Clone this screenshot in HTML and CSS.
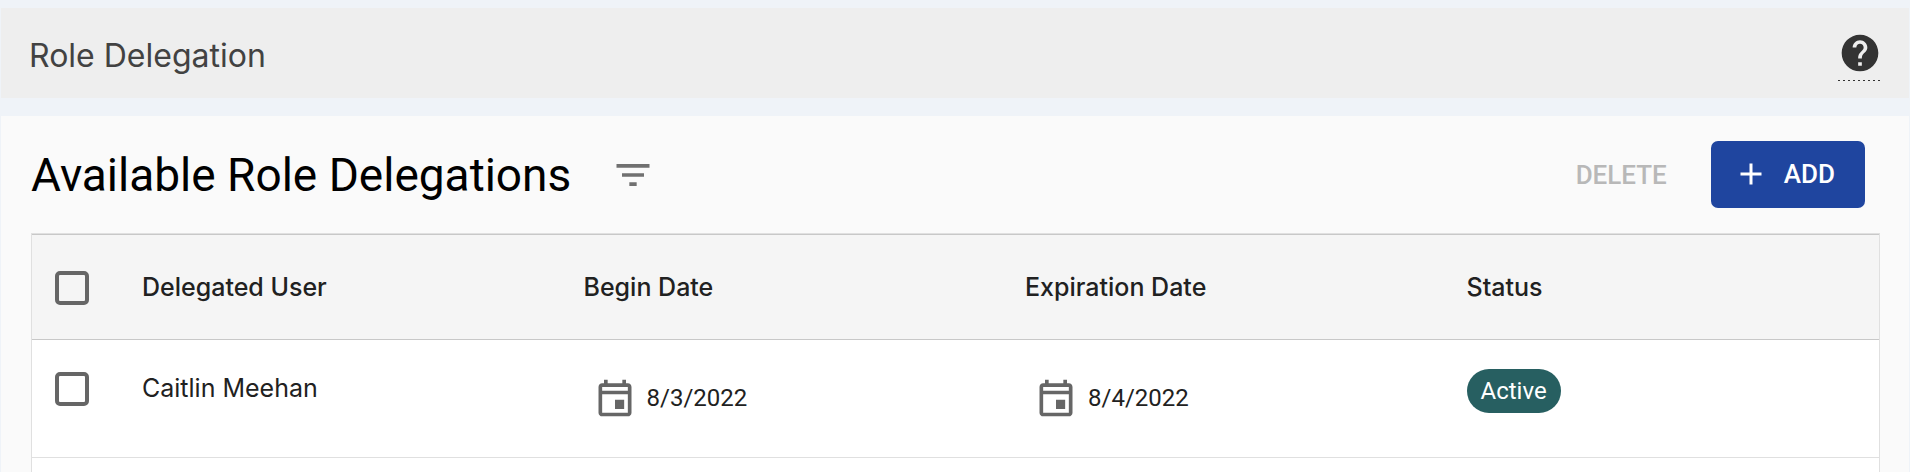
FILE: index.html
```html
<!DOCTYPE html>
<html lang="en">
<head>
<meta charset="utf-8">
<title>Role Delegation</title>
<link rel="stylesheet" href="styles.css">
</head>
<body>
<header class="page-header">
  <h1 class="page-title">Role Delegation</h1>
  <button class="help" type="button" aria-label="Help">
    <svg class="icon" viewBox="0 0 24 24" aria-hidden="true"><path d="M12 2C6.48 2 2 6.48 2 12s4.48 10 10 10 10-4.48 10-10S17.52 2 12 2zm1 17h-2v-2h2v2zm2.07-7.75l-.9.92C13.45 12.9 13 13.5 13 15h-2v-.5c0-1.1.45-2.1 1.17-2.83l1.24-1.26c.37-.36.59-.86.59-1.41 0-1.1-.9-2-2-2s-2 .9-2 2H8c0-2.21 1.79-4 4-4s4 1.79 4 4c0 .88-.36 1.68-.93 2.25z"/></svg>
  </button>
</header>
<main class="panel">
  <div class="toolbar">
    <h2 class="panel-title">Available Role Delegations</h2>
    <button class="filter" type="button" aria-label="Filter list">
      <svg class="icon" viewBox="0 0 24 24" aria-hidden="true"><path d="M10 18h4v-2h-4v2zM3 6v2h18V6H3zm3 7h12v-2H6v2z"/></svg>
    </button>
    <div class="actions">
      <button class="button button-text" type="button" disabled>DELETE</button>
      <button class="button button-primary" type="button">
        <svg class="icon-small" viewBox="0 0 24 24" aria-hidden="true"><path d="M19 13h-6v6h-2v-6H5v-2h6V5h2v6h6v2z"/></svg>
        ADD
      </button>
    </div>
  </div>
  <table class="table">
    <thead>
      <tr>
        <th class="check-cell"><input class="checkbox" type="checkbox" aria-label="Select all"></th>
        <th scope="col">Delegated User</th>
        <th scope="col">Begin Date</th>
        <th scope="col">Expiration Date</th>
        <th scope="col">Status</th>
      </tr>
    </thead>
    <tbody>
      <tr>
        <td class="check-cell"><input class="checkbox" type="checkbox" aria-label="Select Caitlin Meehan"></td>
        <td>Caitlin Meehan</td>
        <td><div class="date"><svg class="icon" viewBox="0 0 24 24" aria-hidden="true"><path d="M19 4h-1V2h-2v2H8V2H6v2H5c-1.11 0-1.99.9-1.99 2L3 20c0 1.1.89 2 2 2h14c1.1 0 2-.9 2-2V6c0-1.1-.9-2-2-2zm0 16H5V10h14v10zm0-12H5V6h14v2zm-7 5h5v5h-5z"/></svg>8/3/2022</div></td>
        <td><div class="date"><svg class="icon" viewBox="0 0 24 24" aria-hidden="true"><path d="M19 4h-1V2h-2v2H8V2H6v2H5c-1.11 0-1.99.9-1.99 2L3 20c0 1.1.89 2 2 2h14c1.1 0 2-.9 2-2V6c0-1.1-.9-2-2-2zm0 16H5V10h14v10zm0-12H5V6h14v2zm-7 5h5v5h-5z"/></svg>8/4/2022</div></td>
        <td class="chip-cell"><span class="chip">Active</span></td>
      </tr>
      <tr class="next-row"><td colspan="5"></td></tr>
    </tbody>
  </table>
</main>
</body>
</html>
```
FILE: styles.css
```css
* { box-sizing: border-box; }

body {
  margin: 0;
  padding: 8px 1px 0;
  background: #eff3f8;
  color: #212121;
  font-family: Inter, sans-serif;
  font-size: 25px;
  line-height: 32px;
}

button {
  border: 0;
  padding: 0;
  background: none;
  color: inherit;
  font: inherit;
}

.icon { display: block; width: 44px; height: 44px; fill: currentColor; }
.icon-small { display: block; width: 36px; height: 36px; fill: currentColor; }

.page-header {
  display: flex;
  align-items: center;
  justify-content: space-between;
  padding: 23px 27px 17px 28px;
  background: #eee;
}

.page-title {
  margin: 0;
  color: #424242;
  font-size: 32px;
  font-weight: 400;
  line-height: 40px;
}

.help {
  padding-bottom: 6px;
  background: repeating-linear-gradient(90deg, #333 0 2px, transparent 2px 5px) bottom / 100% 1px no-repeat;
  color: #333;
}

.panel {
  margin-top: 18px;
  padding: 0 29px 0 30px;
  background: #fafafa;
}

.toolbar {
  display: flex;
  align-items: center;
  padding: 25px 15px 25px 0;
  font-family: Roboto, sans-serif;
}

.panel-title {
  margin: 0;
  color: #000;
  font-size: 46px;
  font-weight: 400;
  line-height: 56px;
}

.filter { margin-left: 40px; color: #707070; }

.actions {
  display: flex;
  align-items: center;
  gap: 44px;
  margin-left: auto;
}

.button { font-size: 26px; font-weight: 500; }
.button-text { color: #b8b8b8; }

.button-primary {
  display: flex;
  align-items: center;
  gap: 15px;
  padding: 15px 30px 16px 22px;
  border-radius: 7px;
  background: #1f459f;
  color: #fff;
}

.table {
  width: 100%;
  table-layout: fixed;
  border: 1px solid #e0e0e0;
  border-spacing: 0;
  background: #fff;
}

.table th,
.table td { padding: 0 0 0 29px; text-align: left; vertical-align: top; }

.table th {
  height: 106px;
  padding-top: 36px;
  border-top: 1px solid #c8c8c8;
  border-bottom: 1px solid #c8c8c8;
  background: #f5f5f5;
  font-weight: 500;
}

.table td {
  height: 118px;
  padding-top: 32px;
  border-bottom: 1px solid #e0e0e0;
}

.table .check-cell { width: 81px; padding-left: 23px; }
.table .chip-cell { padding-top: 29px; }

.checkbox {
  display: block;
  width: 34px;
  height: 34px;
  margin: 0;
  border: 4px solid #666;
  border-radius: 5px;
  appearance: none;
}

.date {
  display: flex;
  align-items: center;
  gap: 10px;
  margin-top: 4px;
  padding-left: 9px;
  font-family: Roboto, sans-serif;
  font-size: 24px;
}

.date .icon { fill: #666; }

.chip {
  display: block;
  width: fit-content;
  padding: 6px 14px;
  border-radius: 22px;
  background: #275f61;
  color: #fff;
  font-family: Roboto, sans-serif;
  font-size: 24px;
}

.table .next-row td { height: 14px; padding: 0; border-bottom: 0; }
```
